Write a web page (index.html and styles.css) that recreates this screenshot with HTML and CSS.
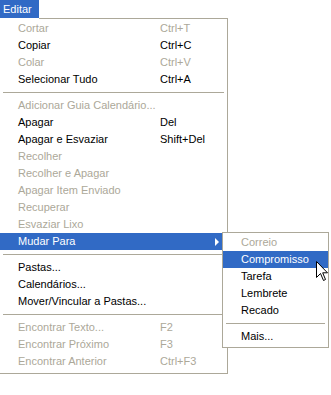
FILE: index.html
```html
<!DOCTYPE html>
<html lang="pt">
<head>
  <meta charset="UTF-8">
  <title>Editar</title>
  <link rel="stylesheet" href="styles.css">
</head>
<body>

  <div class="menu-wrap">
    <div class="menubar">
      <div class="menu-title">Editar</div>
      <div class="menubar-fill"></div>
    </div>

    <div class="menu">
      <div class="item disabled"><span class="label">Cortar</span><span class="key">Ctrl+T</span></div>
      <div class="item"><span class="label">Copiar</span><span class="key">Ctrl+C</span></div>
      <div class="item disabled"><span class="label">Colar</span><span class="key">Ctrl+V</span></div>
      <div class="item"><span class="label">Selecionar Tudo</span><span class="key">Ctrl+A</span></div>
      <div class="sep"></div>
      <div class="item disabled"><span class="label">Adicionar Guia Calendário...</span></div>
      <div class="item"><span class="label">Apagar</span><span class="key">Del</span></div>
      <div class="item"><span class="label">Apagar e Esvaziar</span><span class="key">Shift+Del</span></div>
      <div class="item disabled"><span class="label">Recolher</span></div>
      <div class="item disabled"><span class="label">Recolher e Apagar</span></div>
      <div class="item disabled"><span class="label">Apagar Item Enviado</span></div>
      <div class="item disabled"><span class="label">Recuperar</span></div>
      <div class="item disabled"><span class="label">Esvaziar Lixo</span></div>
      <div class="item active"><span class="label">Mudar Para</span><span class="arrow"></span></div>
      <div class="sep"></div>
      <div class="item"><span class="label">Pastas...</span></div>
      <div class="item"><span class="label">Calendários...</span></div>
      <div class="item"><span class="label">Mover/Vincular a Pastas...</span></div>
      <div class="sep"></div>
      <div class="item disabled"><span class="label">Encontrar Texto...</span><span class="key">F2</span></div>
      <div class="item disabled"><span class="label">Encontrar Próximo</span><span class="key">F3</span></div>
      <div class="item disabled"><span class="label">Encontrar Anterior</span><span class="key">Ctrl+F3</span></div>
    </div>

    <!-- submenu of "Mudar Para" -->
    <div class="menu submenu">
      <div class="item disabled">Correio</div>
      <div class="item active">Compromisso</div>
      <div class="item">Tarefa</div>
      <div class="item">Lembrete</div>
      <div class="item">Recado</div>
      <div class="sep"></div>
      <div class="item">Mais...</div>
    </div>

    <svg class="cursor" width="13" height="21" viewBox="0 0 13 21">
      <path d="M0.5 0.5 L0.5 16.5 L4.5 12.5 L7.5 19.5 L9.5 18.5 L6.7 11.8 L11.5 11.8 Z" fill="#fff" stroke="#000" stroke-width="1"/>
    </svg>
  </div>

</body>
</html>
```

FILE: styles.css
```css
body {
  margin: 0;
  padding: 0;
  background: #fff;
  font-family: "Liberation Sans", Arial, sans-serif;
  font-size: 11px;
  color: #000;
}

.menu-wrap {
  position: relative;
  width: 229px;
  margin-left: -1px;
}

.menubar {
  display: flex;
  height: 19px;
}

.menu-title {
  margin-left: 1px;
  width: 39px;
  height: 18px;
  line-height: 18px;
  padding-left: 3px;
  box-sizing: border-box;
  background: #316ac5;
  color: #fff;
}

.menubar-fill {
  flex: 1;
  border-bottom: 1px solid #aca899;
}

.menu {
  border: 1px solid #aca899;
  border-top: none;
  padding: 1px 0 3px;
  background: #fff;
}

.item {
  display: flex;
  align-items: center;
  height: 17px;
  line-height: 17px;
  padding-left: 18px;
  white-space: nowrap;
}

.item .label {
  width: 142px;
}

.item.disabled {
  color: #aca899;
}

.item.active {
  background: #316ac5;
  color: #fff;
}

.arrow {
  margin-left: auto;
  margin-right: 8px;
  width: 0;
  height: 0;
  border-left: 4px solid #fff;
  border-top: 4px solid transparent;
  border-bottom: 4px solid transparent;
}

.sep {
  height: 9px;
  margin: 0 3px;
  position: relative;
}

.sep::after {
  content: "";
  position: absolute;
  left: 0;
  right: 0;
  top: 4px;
  border-top: 1px solid #aca899;
}

.submenu {
  position: absolute;
  left: 223px;
  top: 232px;
  width: 107px;
  box-sizing: border-box;
  border-top: 1px solid #aca899;
  padding: 1px 0 2px;
}

.cursor {
  position: absolute;
  left: 317px;
  top: 261px;
}
```
